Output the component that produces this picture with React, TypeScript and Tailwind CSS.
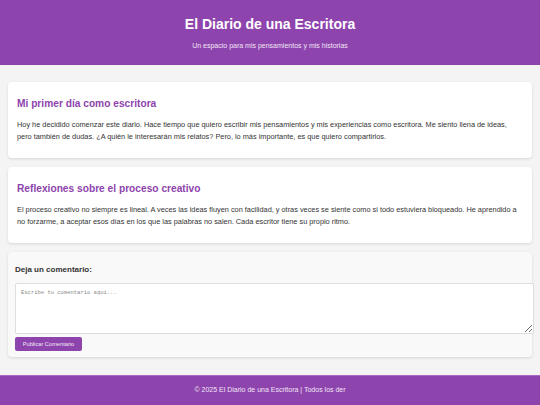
import React from "react";

const font = { fontFamily: '"Liberation Sans", Arial, sans-serif' };

function Entry({ title, text }: { title: string; text: string }) {
  return (
    <article className="bg-white rounded-[4px] shadow-[0_1px_3px_rgba(0,0,0,0.12)] px-[9px] pt-[15px] pb-[15px]">
      <h2 className="text-[10.2px] leading-[14px] font-bold text-[#8e44ad] mb-[8px]">{title}</h2>
      <p className="text-[7.35px] leading-[12px] text-[#333]">{text}</p>
    </article>
  );
}

export default function App() {
  return (
    <div style={font} className="w-[540px] min-h-[405px] bg-[#f4f4f4] flex flex-col">
      <header className="bg-[#8e44ad] h-[65px] pt-[15px] text-center">
        <h1 className="text-[14px] leading-[18px] font-bold text-white">El Diario de una Escritora</h1>
        <p className="mt-[8px] text-[7px] leading-[10px] text-[#f1e4f6]">Un espacio para mis pensamientos y mis historias</p>
      </header>
      <main className="px-[8px] pt-[17px] pb-[18px] flex flex-col gap-[9px]">
        <Entry
          title="Mi primer día como escritora"
          text="Hoy he decidido comenzar este diario. Hace tiempo que quiero escribir mis pensamientos y mis experiencias como escritora. Me siento llena de ideas, pero también de dudas. ¿A quién le interesarán mis relatos? Pero, lo más importante, es que quiero compartirlos."
        />
        <Entry
          title="Reflexiones sobre el proceso creativo"
          text="El proceso creativo no siempre es lineal. A veces las ideas fluyen con facilidad, y otras veces se siente como si todo estuviera bloqueado. He aprendido a no forzarme, a aceptar esos días en los que las palabras no salen. Cada escritor tiene su propio ritmo."
        />
        <section className="bg-[#f9f9f9] rounded-[4px] shadow-[0_1px_3px_rgba(0,0,0,0.12)] px-[7px] pt-[13px] pb-[6px] leading-[10px]">
          <h3 className="text-[8px] leading-[10px] font-bold text-[#333] mb-[8px]">Deja un comentario:</h3>
          <textarea
            placeholder="Escribe tu comentario aquí..."
            className="block w-[519px] h-[51px] bg-white border border-[#ddd] rounded-[2px] px-[5px] py-[5px] text-[5.5px] leading-[7px] placeholder:text-[#8a8a8a] resize-y"
            style={{ fontFamily: '"Liberation Mono", "Courier New", monospace' }}
          />
          <button className="block mt-[3px] h-[14px] w-[67px] bg-[#8e44ad] rounded-[2px] text-[5.7px] leading-[14px] text-[#f3e8f7] text-center">
            Publicar Comentario
          </button>
        </section>
      </main>
      <footer className="bg-[#8e44ad] border-t border-[#a66bc0] pt-[9px] pb-[12px] text-center">
        <p className="text-[7px] leading-[9px] text-[#f1e4f6]">© 2025 El Diario de una Escritora | Todos los der</p>
      </footer>
    </div>
  );
}
